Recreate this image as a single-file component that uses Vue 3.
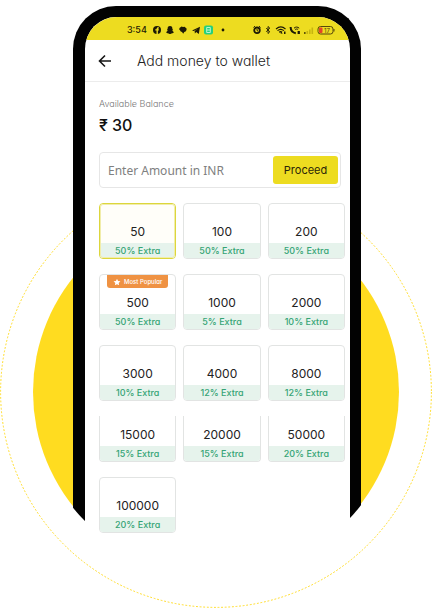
<script setup>

import { ref } from 'vue'

const amount = ref('')
const selected = ref(50)

const offers = [
  { value: 50, extra: 50 },
  { value: 100, extra: 50 },
  { value: 200, extra: 50 },
  { value: 500, extra: 50, popular: true },
  { value: 1000, extra: 5 },
  { value: 2000, extra: 10 },
  { value: 3000, extra: 10 },
  { value: 4000, extra: 12 },
  { value: 8000, extra: 12 },
  { value: 15000, extra: 15, open: true },
  { value: 20000, extra: 15, open: true },
  { value: 50000, extra: 20, open: true },
  { value: 100000, extra: 20 },
]

const pick = (value) => {
  selected.value = value
  amount.value = value
}

</script>

<template>
  <main class="stage">
    <svg class="rings" viewBox="0 0 432 432" aria-hidden="true">
      <circle cx="216" cy="216" r="183" fill="#ffdc20" />
      <circle cx="216" cy="216" r="215.4" fill="none" stroke="#ffdc20" stroke-dasharray="1.8 1.8" />
    </svg>

    <div class="mask">
      <div class="phone">
        <div class="screen">
          <div class="status">
            <span class="time">3:54</span>
            <svg class="apps" viewBox="0 0 74 12" aria-hidden="true">
              <circle cx="5" cy="6" r="4" fill="#1d1a05" />
              <path d="M4.500 10V6.600H3.300V5.300h1.200c0-1.600.8-2.200 2.400-2v1.200c-.8 0-1 .2-1 .8H7l-.2 1.300h-.9V10z" fill="#ecdc20" />
              <path d="M18 2c1.800 0 2.500 1.200 2.400 3.200l.8.1-.8 1c.3 1 .9 1.500 1.600 1.900-.4.600-1 .6-1.400.7l-.3.7-1.100-.1c-.8.700-1.600.7-2.400 0l-1.100.1-.3-.7c-.4-.1-1-.1-1.400-.7.7-.4 1.300-.9 1.600-1.900l-.8-1 .8-.1C15.500 3.200 16.200 2 18 2z" fill="#1d1a05" />
              <path d="M27.500 4 29.500 2.500l1.500.4 1.500-.2 1.200 1.100 1 .9-.3 1.500-.8 1.300-1.300.6-1.100 1.700-1.200-1.700-1.300-.5-.7-1.300-.8-.8z" fill="#1d1a05" />
              <path d="M40 6.500 48 2.700l-1.200 7.200-2.600-1.800-1.300 1.300-.3-2.300 3.500-2.700-4.300 2.500z" fill="#1d1a05" />
              <rect x="52" y="1.500" width="9" height="9" rx="2" fill="#24d07c" />
              <path d="M54.700 3.500h3.600v5h-3.600zM54.700 6h3.600" fill="none" stroke="#b8f3cf" stroke-width="1" />
              <circle cx="71" cy="6" r="1.400" fill="#1d1a05" />
            </svg>
            <svg class="signals" viewBox="0 0 84 12" aria-hidden="true">
              <g fill="none" stroke="#1d1a05">
                <circle cx="5" cy="6.300" r="2.800" stroke-width="1.800" />
                <path d="M1.500 3.500 3 2.200M8.500 3.500 7 2.200M5 5v1.500l1 .6" stroke-width="1" />
                <path d="m14.200 4 3.600 3.800L16 9.500v-7L17.800 4l-3.600 3.800" stroke-width=".9" />
                <path d="M24 5c3-2.700 6.500-2.700 9.500 0M25.500 6.700c2-1.700 4.500-1.700 6.400 0M27.100 8.200c1-.8 2-.8 3 0" stroke-width="1.100" />
                <path d="M42 4.200c1.600-1.500 3.600-1.500 5.200 0M43.100 5.600c1-.8 2-.8 3 0" stroke-width="1" />
                <path d="M38.600 3c.1 3.400 2 5.700 5.200 6.200" stroke-width="2" />
              </g>
              <path d="M28 9l1.700-1.200L30.500 10zM32 7.500h1.500V10H32zM45.600 7h2.300v3h-2.300z" fill="#1d1a05" />
              <path d="M52 8h1.600v2H52z" fill="#5d5508" />
              <path d="M54.500 7h1.600v3h-1.600zM57 5.500h1.600V10H57zM59.500 3.500h1.600V10h-1.600z" fill="#c6b50f" />
              <rect x="66" y="2.500" width="15" height="7.500" rx="2.500" fill="none" stroke="#57470b" />
              <path d="M82 5v2.500" stroke="#57470b" />
              <rect x="67" y="3.500" width="3.500" height="5.500" rx="1" fill="#e5432a" />
              <text x="72" y="8.500" font-size="6" font-family="Inter, sans-serif" fill="#57470b">17</text>
            </svg>
          </div>

          <header class="bar">
            <button class="back" type="button" aria-label="Back">
              <svg viewBox="0 0 14 14" aria-hidden="true">
                <path d="M13 7H2M7 1.500 1.500 7 7 12.500" fill="none" stroke="#161616" stroke-width="1.600" />
              </svg>
            </button>
            <h1>Add money to wallet</h1>
          </header>

          <section class="content">
            <p class="label">Available Balance</p>
            <p class="balance">₹ 30</p>

            <form class="entry" @submit.prevent>
              <input v-model="amount" type="text" inputmode="numeric" placeholder="Enter Amount in INR" aria-label="Enter Amount in INR">
              <button type="submit">Proceed</button>
            </form>

            <div class="offers">
              <button
                v-for="offer in offers"
                :key="offer.value"
                class="offer"
                :class="{ isSelected: selected === offer.value, isOpen: offer.open }"
                :aria-pressed="selected === offer.value"
                type="button"
                @click="pick(offer.value)"
              >
                <span v-if="offer.popular" class="popular">
                  <svg viewBox="0 0 10 10" aria-hidden="true">
                    <path d="m5 .8 1.300 2.800 3 .4-2.200 2.100.6 3.100L5 7.700 2.300 9.200l.6-3.100L.7 4l3-.4z" fill="#fff" />
                  </svg>
                  Most Popular
                </span>
                <span class="value">{{ offer.value }}</span>
                <span class="extra">{{ offer.extra }}% Extra</span>
              </button>
            </div>
          </section>
        </div>
      </div>
    </div>
  </main>
</template>

<style>
body {
  margin: 0;
  background: #fff;
}
</style>

<style scoped>
.stage {
  max-width: 432px;
  margin: 0 auto;
  display: grid;
  font-family: Inter, "Liberation Sans", sans-serif;
  font-feature-settings: "cv11";
  color: #222;
}

.stage > * {
  grid-area: 1 / 1;
}

.rings {
  width: 100%;
  align-self: end;
  display: block;
}

/* rounds the phone off along the bottom of the yellow disc */
.mask {
  box-sizing: border-box;
  width: 85.2%;
  margin: 0 auto 32px;
  padding: 6px 39px 0 41px;
  border-radius: 0 0 999px 999px;
  overflow: hidden;
}

.phone {
  box-sizing: border-box;
  height: 100%;
  border: solid #020202;
  border-width: 11px 11px 0 12px;
  border-radius: 43px 43px 0 0;
  background: #fff;
}

.screen {
  border-radius: 32px 32px 0 0;
  overflow: hidden;
}

.status {
  height: 23px;
  padding: 3px 14px 0 42px;
  box-sizing: border-box;
  display: flex;
  align-items: center;
  background: #eddc20;
}

.time {
  font-size: 9px;
  font-weight: 500;
  line-height: 12px;
  color: #1d1a05;
}

.apps {
  width: 74px;
  height: 12px;
  margin-left: 5px;
}

.signals {
  width: 84px;
  height: 12px;
  margin-left: auto;
}

.bar {
  height: 41px;
  padding: 0 12px;
  display: flex;
  align-items: center;
  gap: 24px;
  border-bottom: 1px solid #ececec;
}

.back {
  width: 16px;
  height: 16px;
  padding: 1px;
  border: 0;
  background: none;
}

.back svg {
  display: block;
  width: 14px;
  height: 14px;
}

h1 {
  margin: 0;
  font-size: 14px;
  font-weight: 300;
  line-height: 20px;
  white-space: nowrap;
}

.content {
  padding: 16px 5px 43px 14px;
}

.label {
  margin: 0;
  font-size: 9px;
  font-weight: 300;
  line-height: 12px;
  color: #777;
}

.balance {
  margin: 4px 0 0;
  font-size: 16px;
  font-weight: 500;
  line-height: 22px;
  color: #111;
}

.entry {
  box-sizing: border-box;
  height: 36px;
  margin: 16px 4px 15px 0;
  padding: 3px 2px;
  display: flex;
  border: 1px solid #e6e6e6;
  border-radius: 4px;
}

.entry input {
  flex: 1;
  min-width: 0;
  padding: 0 6px;
  border: 0;
  outline: 0;
  background: none;
  font: 12px "Noto Sans", sans-serif;
  color: #222;
}

.entry input::placeholder {
  color: #808080;
  opacity: 1;
}

.entry button {
  width: 65px;
  padding: 0;
  border: 0;
  border-radius: 3px;
  background: #eddc20;
  font: inherit;
  font-size: 11px;
  color: #2a2508;
}

.offers {
  display: grid;
  grid-template-columns: repeat(3, 1fr);
  align-items: start;
  gap: 15px 7px;
}

.offer {
  height: 56px;
  padding: 0;
  display: flex;
  flex-direction: column;
  justify-content: flex-end;
  position: relative;
  border: 1px solid #e2e4e3;
  border-radius: 4px;
  background: #fff;
  overflow: hidden;
  font: inherit;
  font-feature-settings: inherit;
  text-align: center;
  color: #222;
}

.offer.isSelected {
  border-color: #dcd63c;
  outline: 1px solid #f1edaa;
  outline-offset: -2px;
  background: #fffef9;
}

.offer.isOpen {
  height: 46px;
  border-top: 0;
  border-radius: 0 0 4px 4px;
}

.value {
  width: 100%;
  font-size: 12px;
  line-height: 22px;
}

.extra {
  width: 100%;
  font-size: 9px;
  font-weight: 500;
  line-height: 15px;
  background: #e6f3ec;
  color: #35a475;
}

.popular {
  height: 13px;
  padding: 0 6px;
  display: flex;
  align-items: center;
  gap: 3px;
  position: absolute;
  top: 0;
  left: 7px;
  border-radius: 0 0 3px 3px;
  background: #ef9243;
  font-size: 6px;
  font-weight: 500;
  white-space: nowrap;
  color: #fff;
}

.popular svg {
  width: 8px;
  height: 8px;
}
</style>
